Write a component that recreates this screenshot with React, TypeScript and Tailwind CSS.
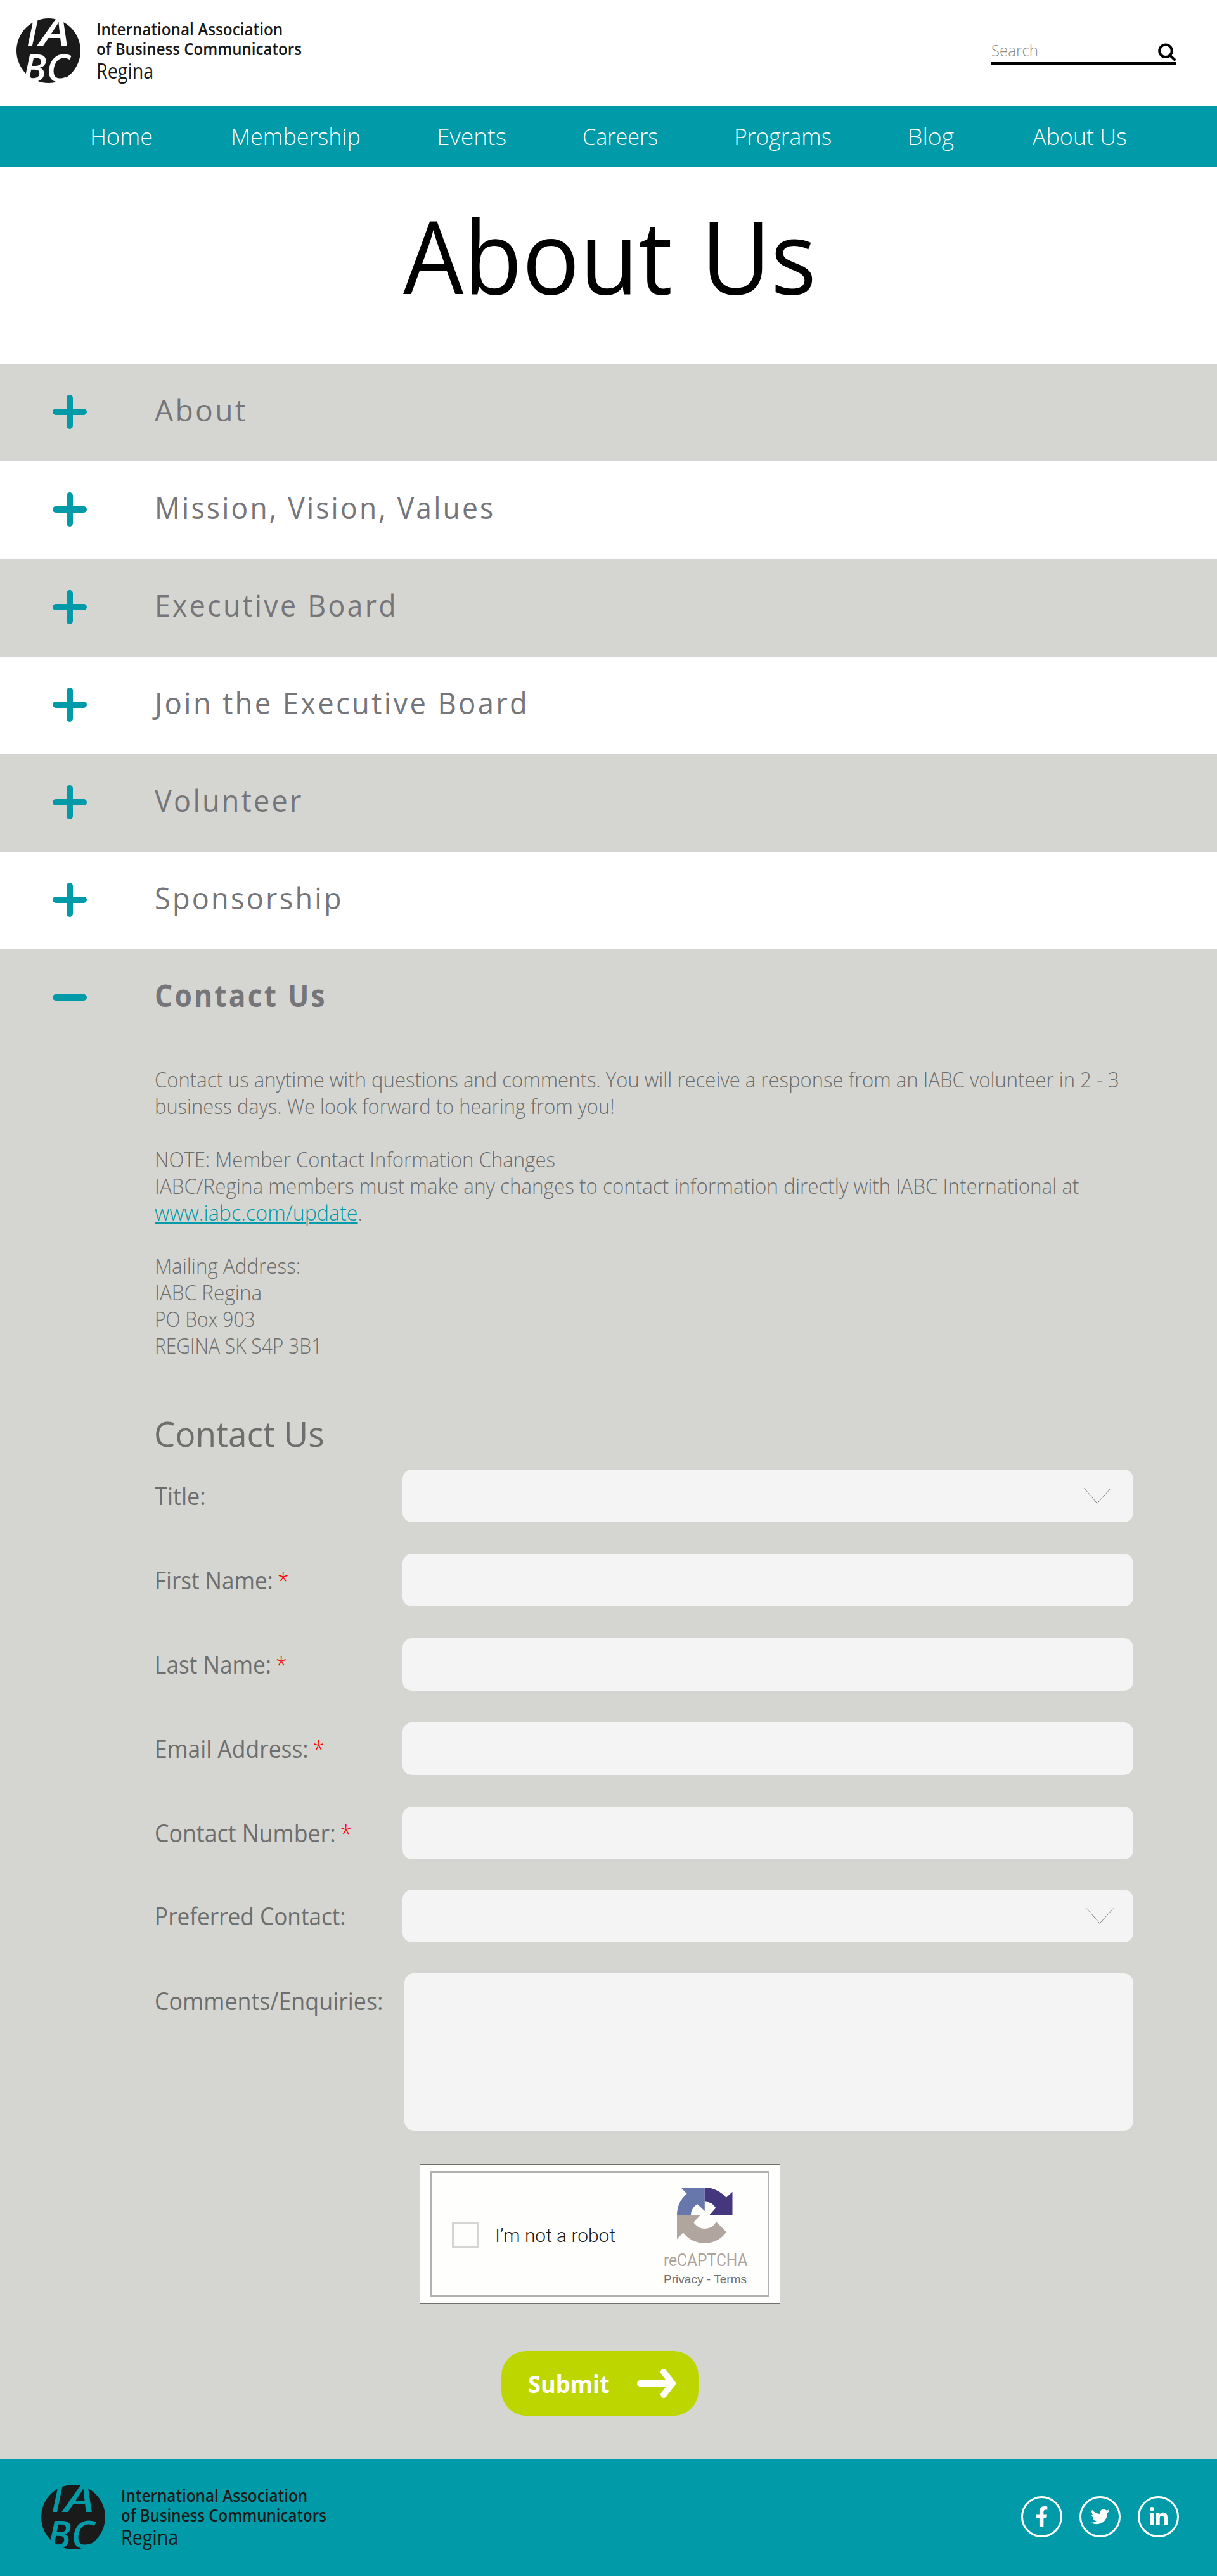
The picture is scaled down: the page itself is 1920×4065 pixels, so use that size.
import { useLayoutEffect, useRef, useState, type ReactNode } from "react";
import { FaFacebookF, FaLinkedinIn, FaTwitter } from "react-icons/fa";

/** A single line of text set to an exact width by condensing its glyphs. */
function Line({
  w,
  className = "",
  children,
}: {
  w: number;
  className?: string;
  children: ReactNode;
}) {
  const ref = useRef<HTMLSpanElement>(null);
  const [scale, setScale] = useState(1);
  useLayoutEffect(() => {
    if (ref.current) setScale(w / ref.current.offsetWidth);
  }, [w]);
  return (
    <span className={`block shrink-0 ${className}`} style={{ width: w }}>
      <span
        ref={ref}
        className="inline-block origin-left whitespace-nowrap align-top"
        style={{ transform: `scaleX(${scale})` }}
      >
        {children}
      </span>
    </span>
  );
}

function Logo({ cut }: { cut: string }) {
  return (
    <div className="flex text-[#1a1a1a]">
      <svg viewBox="0 0 101 102" className="h-[102px] w-[101px] shrink-0">
        <ellipse cx="50.5" cy="51" rx="50.5" ry="51" fill="#1a1a1a" />
        <g
          className={cut}
          fontFamily="'Open Sans', sans-serif"
          fontWeight="600"
          fontStyle="italic"
          fontSize="60"
        >
          <text x="16" y="43.3">I</text>
          <text x="37" y="43.3" textLength="47" lengthAdjust="spacingAndGlyphs">A</text>
          <text x="10" y="99.5" textLength="37" lengthAdjust="spacingAndGlyphs" fontSize="59">B</text>
          <text x="47" y="99.5" textLength="37" lengthAdjust="spacingAndGlyphs" fontSize="59">C</text>
        </g>
      </svg>
      <div className="ml-[25px]">
        <Line w={294} className="mt-[1px] text-[27px] leading-[31px] font-semibold">
          International Association
        </Line>
        <Line w={324} className="text-[27px] leading-[31px] font-semibold">
          of Business Communicators
        </Line>
        <Line w={90} className="mt-[1px] text-[33.5px] leading-[36px]">
          Regina
        </Line>
      </div>
    </div>
  );
}

const NAV: [string, number, string][] = [
  ["Home", 99, "mr-[3px]"],
  ["Membership", 205, ""],
  ["Events", 110, ""],
  ["Careers", 119, ""],
  ["Programs", 154, ""],
  ["Blog", 73, "mr-[4px]"],
  ["About Us", 149, ""],
];

const SECTIONS: [string, number][] = [
  ["About", 147],
  ["Mission, Vision, Values", 537],
  ["Executive Board", 384],
  ["Join the Executive Board", 591],
  ["Volunteer", 235],
  ["Sponsorship", 298],
];

function SectionBar({ title, w, open = false }: { title: string; w: number; open?: boolean }) {
  return (
    <div
      className={`flex h-[154px] items-center gap-[107px] pb-[2px] pl-[83px] ${
        open ? "" : "odd:bg-[#d5d6d1] even:bg-white"
      }`}
    >
      <svg viewBox="0 0 54 54" className="h-[54px] w-[54px]" stroke="#009aa8" strokeWidth="10" strokeLinecap="round">
        <path d="M5 27H49" />
        {!open && <path d="M27 5V49" />}
      </svg>
      <Line
        w={w}
        className={`pb-[6px] text-[48px] leading-[60px] tracking-[3.5px] text-[#75757a] ${open ? "font-bold" : ""}`}
      >
        {title}
      </Line>
    </div>
  );
}

function Field({
  label,
  w,
  required,
  select,
}: {
  label: string;
  w: number;
  required?: boolean;
  select?: string;
}) {
  return (
    <div className="flex h-[83px] items-center">
      <div className="flex w-[391px] gap-[7px] text-[37.5px] leading-[50px] text-[#6d6e6e]">
        <Line w={w}>{label}</Line>
        {required && <Line w={18} className="font-light text-[#ff0000]">*</Line>}
      </div>
      <div className="flex h-full w-[1153px] items-start justify-end rounded-[15px] bg-[#f4f4f4]">
        {select && (
          <svg viewBox="0 0 43 25" className={`mt-[29px] h-[25px] w-[43px] ${select}`} fill="none" stroke="#808080">
            <path d="M0.5 0.5L21 24.3L42.5 0.5" />
          </svg>
        )}
      </div>
    </div>
  );
}

function Captcha() {
  return (
    <div className="ml-[662px] mt-[53px] h-[220px] w-[569px] border border-[#707070] bg-[#fefefd] px-[16px] pt-[10px]">
      <div className="flex h-[199px] w-[535px] border-[3px] border-[#b0b1b1]">
        <div className="ml-[31px] mt-[77px] h-[42px] w-[42px] border-[3px] border-[#d5d5d4]" />
        <Line w={190} className="ml-[26px] mt-[81px] font-['Roboto'] text-[29px] leading-[36px] font-light text-[#1a1a1a]">
          I’m not a robot
        </Line>
        <div className="ml-[76px] mt-[23px]">
          <svg viewBox="0 0 88 88" className="ml-[21px] h-[88px] w-[88px]">
            <path fill="#6877ab" d="M6.3 0H43.8V37L32 26Q22 33 21.9 43.7H0Q0 23 15.6 9.7Z" />
            <path fill="#45377d" d="M43.8 0Q63 0 77.7 15.7L87.5 6.7V43.7H50.9L61.2 32.3Q56 22.5 43.8 22.3Z" />
            <path
              fill="#b0a59f"
              d="M0 43.7H36.6L26.3 55Q33 65 44.2 65Q56 65 62 54L78 70.3Q65 87.7 44 87.7Q23 87.7 9.8 71.3L0 81.3Z"
            />
          </svg>
          <Line w={133} className="mt-[9px] font-['Roboto'] text-[27.5px] leading-[36px] text-[#afa49d]">
            reCAPTCHA
          </Line>
          <Line w={131} className="font-['Liberation_Sans'] text-[18.5px] leading-[24px] text-[#707070]">
            Privacy - Terms
          </Line>
        </div>
      </div>
    </div>
  );
}

export default function App() {
  return (
    <div className="w-[1920px] bg-white font-['Open_Sans',sans-serif]">
      <header className="flex h-[168px] items-start justify-between pl-[26px] pr-[64px] pt-[29px]">
        <Logo cut="fill-white" />
        <div className="mt-[34px] flex h-[40px] w-[292px] items-start justify-between border-b-[5px] border-black">
          <Line w={74} className="text-[25px] leading-[32px] font-light text-[#8c8c8c]">
            Search
          </Line>
          <svg viewBox="0 0 28 28" className="mr-[1px] mt-[5px] h-[28px] w-[28px]" fill="none" stroke="#000" strokeWidth="4">
            <circle cx="12" cy="12.3" r="9.8" />
            <path d="M19.5 20L26 26" strokeLinecap="round" />
          </svg>
        </div>
      </header>

      <nav className="flex h-[96px] items-center gap-[120px] bg-[#009aa8] pb-[3px] pl-[142px] text-[37.3px] leading-[50px] font-light text-white">
        {NAV.map(([label, w, space]) => (
          <Line key={label} w={w} className={space}>
            {label}
          </Line>
        ))}
      </nav>

      <h1 className="flex h-[310px] justify-center pl-[4px] pt-[58px] text-[160px] leading-[160px] text-black">
        <Line w={652} className="[word-spacing:6px]">About Us</Line>
      </h1>

      <div>
        {SECTIONS.map(([title, w]) => (
          <SectionBar key={title} title={title} w={w} />
        ))}
      </div>

      <main className="bg-[#d5d6d1] pb-[69px]">
        <SectionBar title="Contact Us" w={272} open />

        <div className="pl-[244px] pt-[31px] text-[33px] leading-[42px] font-light text-[#6d6e6e]">
          <Line w={1522}>
            Contact us anytime with questions and comments. You will receive a response from an IABC volunteer in 2 - 3
          </Line>
          <Line w={726}>business days. We look forward to hearing from you!</Line>
          <Line w={632} className="mt-[42px]">NOTE: Member Contact Information Changes</Line>
          <Line w={1459}>
            IABC/Regina members must make any changes to contact information directly with IABC International at
          </Line>
          <Line w={328}>
            <a className="text-[#009aa8] underline decoration-2 underline-offset-[3px]">www.iabc.com/update</a>.
          </Line>
          <Line w={230} className="mt-[42px]">Mailing Address:</Line>
          <Line w={169}>IABC Regina</Line>
          <Line w={159}>PO Box 903</Line>
          <Line w={264}>REGINA SK S4P 3B1</Line>
        </div>

        <h2 className="mt-[87px] pl-[243px] text-[54.5px] leading-[60px] text-[#6d6e6e]">
          <Line w={269}>Contact Us</Line>
        </h2>

        <form className="mt-[27px] pl-[244px]">
          <div className="flex flex-col gap-[50px]">
            <Field label="Title:" w={81} select="mr-[35px]" />
            <Field label="First Name:" w={187} required />
            <Field label="Last Name:" w={184} required />
            <Field label="Email Address:" w={243} required />
            <Field label="Contact Number:" w={286} required />
          </div>
          <div className="mt-[48px]">
            <Field label="Preferred Contact:" w={302} select="mr-[31px]" />
          </div>
          <div className="mt-[49px] flex">
            <Line w={360} className="mt-[19px] text-[37.5px] leading-[50px] text-[#6d6e6e]">
              Comments/Enquiries:
            </Line>
            <div className="ml-[34px] h-[248px] w-[1150px] rounded-[15px] bg-[#f4f4f4]" />
          </div>
        </form>

        <Captcha />

        <button className="ml-[791px] mt-[75px] flex h-[102px] w-[311px] items-center rounded-[39px] bg-[#bdd600] pl-[42px] text-[37px] leading-[50px] font-bold text-white">
          <Line w={129} className="pt-[2px] text-left">Submit</Line>
          <svg
            viewBox="0 0 62 48"
            className="ml-[43px] h-[48px] w-[62px]"
            fill="none"
            stroke="#fff"
            strokeWidth="10"
            strokeLinecap="round"
            strokeLinejoin="round"
          >
            <path d="M5 24H55M42 6L56 24L42 42" />
          </svg>
        </button>
      </main>

      <footer className="flex h-[184px] items-start justify-between bg-[#009aa8] pl-[65px] pr-[60px] pt-[40px]">
        <Logo cut="fill-[#009aa8]" />
        <div className="mt-[18px] flex gap-[27px] text-white">
          <a className="flex h-[65px] w-[65px] items-center justify-center rounded-full border-[3px] border-white">
            <FaFacebookF size={33} />
          </a>
          <a className="flex h-[65px] w-[65px] items-center justify-center rounded-full border-[3px] border-white">
            <FaTwitter size={29} />
          </a>
          <a className="flex h-[65px] w-[65px] items-center justify-center rounded-full border-[3px] border-white">
            <FaLinkedinIn size={32} />
          </a>
        </div>
      </footer>
    </div>
  );
}
